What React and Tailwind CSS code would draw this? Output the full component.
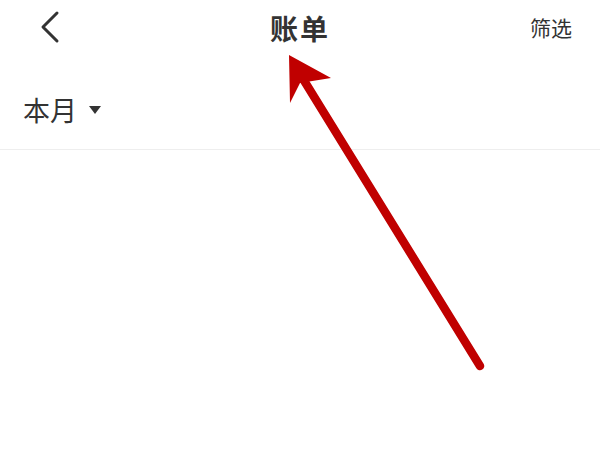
export default function App() {
  return (
    <div
      className="relative w-[600px] h-[451px] bg-white overflow-hidden"
      style={{ fontFamily: '"Noto Sans CJK SC", "Noto Sans", sans-serif' }}
    >
      <div className="relative h-[56px] flex items-center justify-center">
        <svg className="absolute left-[38px] top-[10px]" width="24" height="34" viewBox="0 0 24 34" fill="none">
          <path d="M19 3 L5 17 L19 31" stroke="#333" strokeWidth="3" strokeLinecap="round" strokeLinejoin="round" />
        </svg>
        <h1 className="text-[28px] font-bold text-[#333] tracking-[2px] leading-none">账单</h1>
        <span className="absolute right-[28px] top-[13px] text-[21px] text-[#333] leading-[28px]">筛选</span>
      </div>
      <div className="h-[94px] flex items-center pl-[23px] pt-[14px] border-b border-[#eeeeee]">
        <span className="text-[27px] text-[#333] leading-none">本月</span>
        <svg className="ml-[11px]" width="14" height="10" viewBox="0 0 14 10">
          <path d="M1 1 L13 1 L7 9 Z" fill="#333" />
        </svg>
      </div>
      <svg className="absolute inset-0 pointer-events-none" width="600" height="451" viewBox="0 0 600 451">
        <line x1="480" y1="366" x2="300" y2="74" stroke="#c00000" strokeWidth="8.5" strokeLinecap="round" />
        <path d="M289 55 L331 78 L300 83 L290 103 Z" fill="#c00000" />
      </svg>
    </div>
  );
}
